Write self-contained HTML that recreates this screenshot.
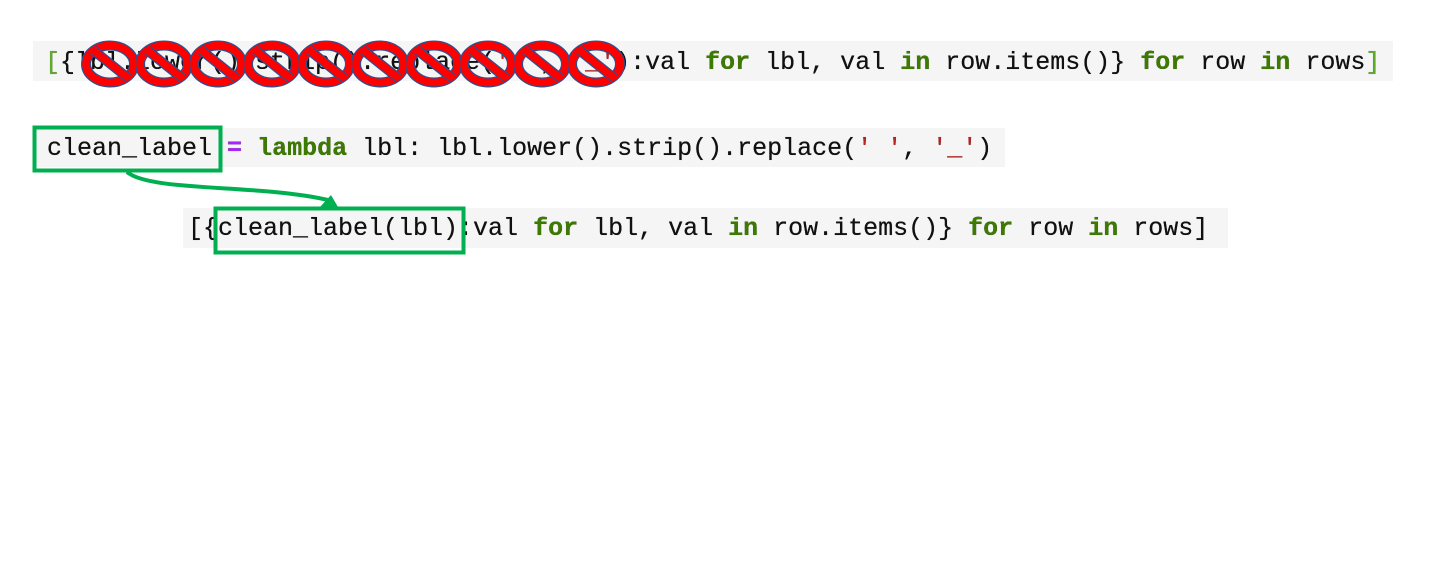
<!DOCTYPE html>
<html><head><meta charset="utf-8"><style>
body{margin:0;width:1433px;height:565px;background:#fff;position:relative;overflow:hidden;font-family:"Liberation Mono",monospace;}
.r{position:absolute;background:#f5f5f5;font-size:25px;white-space:pre;color:#111;box-sizing:border-box;text-shadow:0 0 0.4px #000;}
.k{color:#3d7a00;font-weight:bold}
.s{color:#ba2121}
.o{color:#aa22ff;font-weight:bold}
.g{color:#5fae28}
</style></head><body>
<div class="r" style="left:33px;top:41px;width:1360px;height:40px;line-height:44px;padding-left:12px"><span class="g">[</span>{lbl.lower().strip().replace(<span class="s">' '</span>, <span class="s">'_'</span>):val <span class="k">for</span> lbl, val <span class="k">in</span> row.items()} <span class="k">for</span> row <span class="k">in</span> rows<span class="g">]</span></div>
<div class="r" style="left:33px;top:128px;width:972px;height:39px;line-height:41px;padding-left:14px">clean_label <span class="o">=</span> <span class="k">lambda</span> lbl: lbl.lower().strip().replace(<span class="s">' '</span>, <span class="s">'_'</span>)</div>
<div class="r" style="left:183px;top:208px;width:1045px;height:40px;line-height:42px;padding-left:5px">[{clean_label(lbl):val <span class="k">for</span> lbl, val <span class="k">in</span> row.items()} <span class="k">for</span> row <span class="k">in</span> rows]</div>
<svg width="1433" height="565" style="position:absolute;left:0;top:0">
<rect x="34.5" y="127.5" width="186" height="43" fill="none" stroke="#00b050" stroke-width="4"/>
<rect x="215.5" y="208.5" width="248" height="44" fill="none" stroke="#00b050" stroke-width="4"/>
<path d="M127 172 C150 192 260 184 328 200" fill="none" stroke="#00b050" stroke-width="4"/>
<polygon points="320,207 338,207 331,195" fill="#00b050"/>
<g id="no">
<ellipse cx="110" cy="64" rx="24" ry="18.5" fill="none" stroke="#2f4f8f" stroke-width="10"/>
<ellipse cx="110" cy="64" rx="24" ry="18.5" fill="none" stroke="#f00" stroke-width="7.5"/>
<line x1="93" y1="50" x2="128" y2="78" stroke="#2f4f8f" stroke-width="10"/>
<line x1="93" y1="50" x2="128" y2="78" stroke="#f00" stroke-width="7.5"/>
</g>
<use href="#no" x="54"/><use href="#no" x="108"/><use href="#no" x="162"/><use href="#no" x="216"/><use href="#no" x="270"/><use href="#no" x="324"/><use href="#no" x="378"/><use href="#no" x="432"/><use href="#no" x="486"/>
</svg>
</body></html>
